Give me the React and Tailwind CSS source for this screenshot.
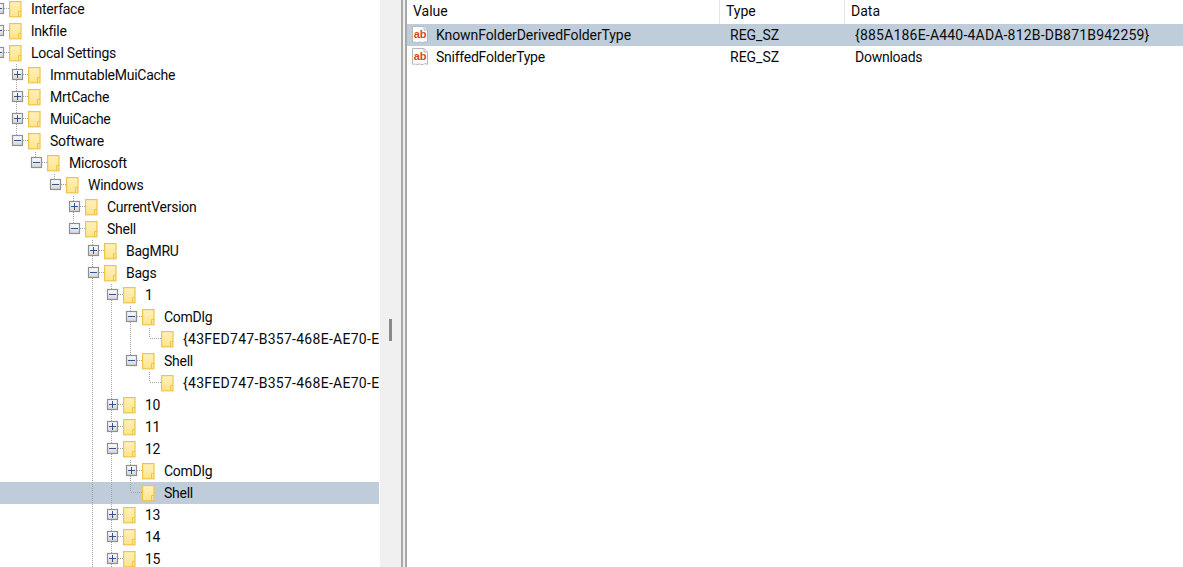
import React from "react";

const FONT = "font-['Roboto','Liberation_Sans',sans-serif]";
const GUID = "{43FED747-B357-468E-AE70-E";

const RAW = [
  [0, "Interface", "plus"],
  [0, "lnkfile", "plus"],
  [0, "Local Settings", "minus"],
  [1, "ImmutableMuiCache", "plus"],
  [1, "MrtCache", "plus"],
  [1, "MuiCache", "plus"],
  [1, "Software", "minus"],
  [2, "Microsoft", "minus"],
  [3, "Windows", "minus"],
  [4, "CurrentVersion", "plus"],
  [4, "Shell", "minus"],
  [5, "BagMRU", "plus"],
  [5, "Bags", "minus"],
  [6, "1", "minus"],
  [7, "ComDlg", "minus"],
  [8, GUID, null],
  [7, "Shell", "minus"],
  [8, GUID, null],
  [6, "10", "plus"],
  [6, "11", "plus"],
  [6, "12", "minus"],
  [7, "ComDlg", "plus"],
  [7, "Shell", null, true],
  [6, "13", "plus"],
  [6, "14", "plus"],
  [6, "15", "plus"],
];

// Levels whose siblings carry on below the visible part of the tree.
const CONTINUES = new Set([0, 5, 6]);

function continues(index, level) {
  for (let i = index + 1; i < RAW.length; i++) {
    if (RAW[i][0] < level) return false;
    if (RAW[i][0] === level) return true;
  }
  return CONTINUES.has(level);
}

const DOT = "#a3a3a3";

function GuideCell({ on }) {
  return (
    <svg width="19" height="22" className="shrink-0 block">
      {on && <path d="M7.5 0V22" stroke={DOT} strokeDasharray="1 1" fill="none" />}
    </svg>
  );
}

function ExpanderCell({ kind, hasNext, first }) {
  return (
    <svg width="19" height="22" className="shrink-0 block">
      <defs>
        <linearGradient id="boxfill" x1="0" y1="0" x2="0" y2="1">
          <stop offset="0" stopColor="#ffffff" />
          <stop offset="1" stopColor="#d4d4d4" />
        </linearGradient>
      </defs>
      {!first && <path d={kind ? "M7.5 0V5" : "M7.5 0V10"} stroke={DOT} strokeDasharray="1 1" fill="none" />}
      {hasNext && <path d={kind ? "M7.5 16V22" : "M7.5 10V22"} stroke={DOT} strokeDasharray="1 1" fill="none" />}
      <path d={kind ? "M14 10.5H19" : "M8 10.5H19"} stroke={DOT} strokeDasharray="1 1" fill="none" />
      {kind && (
        <g>
          <rect x="3.5" y="5.5" width="10" height="10" fill="url(#boxfill)" stroke="#8f8f8f" strokeWidth="1.2" />
          <path d="M5 10.5H12" stroke="#34548f" strokeWidth="1" />
          {kind === "plus" && <path d="M8.5 7V14" stroke="#34548f" strokeWidth="1" />}
        </g>
      )}
    </svg>
  );
}

function Folder() {
  return (
    <svg width="13" height="22" className="shrink-0 block">
      <defs>
        <linearGradient id="folderfill" x1="0" y1="0" x2="0" y2="1">
          <stop offset="0" stopColor="#fff1bd" />
          <stop offset="1" stopColor="#ffe48c" />
        </linearGradient>
      </defs>
      <rect x="0.6" y="3.6" width="11.4" height="15.2" fill="url(#folderfill)" stroke="#efc547" strokeWidth="1.2" />
      <path d="M9.5 18.5V13.5H12" fill="none" stroke="#efc547" />
    </svg>
  );
}

function TreeRow({ index, level, label, kind, selected }) {
  const cells = [];
  for (let g = 0; g < level; g++) {
    cells.push(<GuideCell key={g} on={continues(index, g)} />);
  }
  const isGuid = label === GUID;
  return (
    <div className={`flex h-[22px] items-start whitespace-nowrap ${selected ? "bg-[#bfcddb]" : ""}`}>
      {cells}
      <ExpanderCell kind={kind} hasNext={continues(index, level)} first={index === 0} />
      <Folder />
      <span
        className={`ml-[9px] text-[14px] leading-[22px] text-[#0a0a0a] ${isGuid ? "tracking-[0.28px]" : "tracking-[-0.25px]"}`}
      >
        {label}
      </span>
    </div>
  );
}

function AbIcon() {
  return (
    <svg width="17" height="18" className="shrink-0 block">
      <path
        d="M0.5 0.5H12L15.5 4V16.5C13.5 15 12 16 10 16.8C8 15.4 6.5 16.2 4.8 16.8C3.4 16 2 15.8 0.5 16.5Z"
        fill="#ffffff"
        stroke="#b8b8b8"
      />
      <path d="M12 0.5V4H15.5" fill="#eeeeee" stroke="#b8b8b8" />
      <text x="1.7" y="12" fontSize="11" fontWeight="700" fill="#d4491f" fontFamily="'Liberation Sans', sans-serif">
        ab
      </text>
    </svg>
  );
}

function ValueRow({ name, data, selected }) {
  return (
    <div className={`flex h-[22px] items-center whitespace-nowrap text-[14px] leading-[22px] text-[#0a0a0a] ${selected ? "bg-[#bfcddb]" : ""}`}>
      <div className="flex w-[312px] shrink-0 items-center pl-[5px]">
        <AbIcon />
        <span className={`ml-[7px] ${selected ? "tracking-[-0.08px]" : "tracking-[-0.25px]"}`}>{name}</span>
      </div>
      <div className="w-[125px] shrink-0 pl-[11px]">REG_SZ</div>
      <div className={`pl-[11px] ${selected ? "tracking-[0.2px]" : "tracking-[-0.25px]"}`}>{data}</div>
    </div>
  );
}

function HeaderCell({ className, children }) {
  return (
    <div className={`flex h-[24px] items-start border-r border-[#e5e5e5] pt-px text-[14px] leading-[21px] text-[#0a0a0a] ${className}`}>
      {children}
    </div>
  );
}

export default function App() {
  return (
    <div className={`flex h-[567px] w-[1183px] overflow-hidden bg-white ${FONT}`}>
      <div className="w-[379px] shrink-0 overflow-hidden">
        <div className="ml-[-10px] mt-[-2px]">
          {RAW.map(([level, label, kind, selected], i) => (
            <TreeRow key={i} index={i} level={level} label={label} kind={kind} selected={selected} />
          ))}
        </div>
      </div>
      <div className="ml-px flex w-[21px] shrink-0 items-start justify-center bg-[#f0f0f0] pt-[319px]">
        <div className="h-[22px] w-[3px] bg-[#8a8a8a]" />
      </div>
      <div className="flex w-[6px] shrink-0 justify-between bg-[#f0f0f0]">
        <div className="w-[2px] bg-[#a8a8a8]" />
        <div className="w-[2px] bg-[#a8a8a8]" />
      </div>
      <div className="min-w-0 flex-1">
        <div className="flex">
          <HeaderCell className="w-[313px] shrink-0 pl-[6px]">Value</HeaderCell>
          <HeaderCell className="w-[125px] shrink-0 pl-[6px]">Type</HeaderCell>
          <div className="flex h-[24px] items-start pl-[6px] pt-px text-[14px] leading-[21px] text-[#0a0a0a]">Data</div>
        </div>
        <ValueRow name="KnownFolderDerivedFolderType" data="{885A186E-A440-4ADA-812B-DB871B942259}" selected />
        <ValueRow name="SniffedFolderType" data="Downloads" />
      </div>
    </div>
  );
}
